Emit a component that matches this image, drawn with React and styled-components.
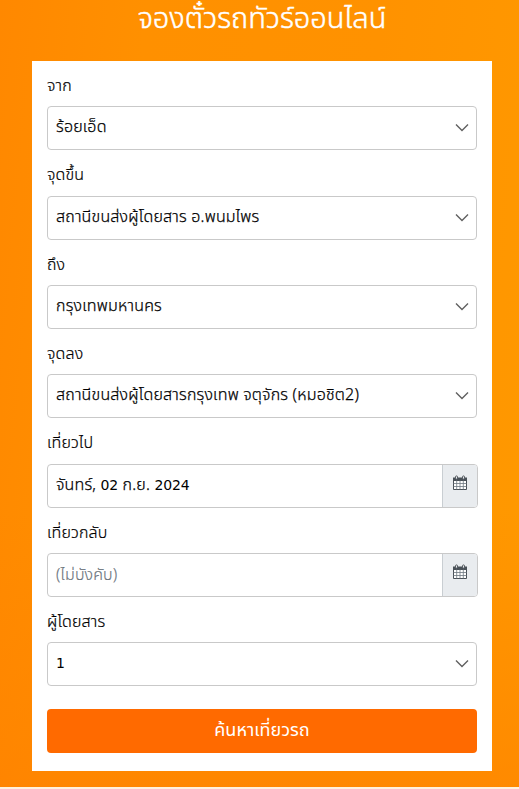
import React from 'react'
import styled, { createGlobalStyle } from 'styled-components'

const GlobalStyle = createGlobalStyle`
  * {
    box-sizing: border-box;
  }

  body {
    margin: 0;
    color: #000;
    font-family: "Noto Sans Thai", "Noto Sans", sans-serif;
    font-size: 16px;
    font-weight: 300;
  }
`

const Page = styled.main`
  height: 789px;
  padding: 0 27px 0 32px;
  border-bottom: 2px solid #fff1dc;
  background:
    linear-gradient(to bottom, rgba(255, 128, 0, 0) 65%, rgba(255, 128, 0, .6) 100%),
    linear-gradient(95deg, #ff8800 0%, #ff9000 25%, #ff9200 65%, #ff9900 100%);
`

const Title = styled.h1`
  height: 61px;
  margin: 0;
  color: #fff;
  font-size: 29px;
  font-weight: 300;
  line-height: 38px;
  text-align: center;
  white-space: nowrap;
  -webkit-text-stroke: .5px;
`

const Form = styled.form`
  height: 710px;
  padding: 15.97px 15px 0;
  background-color: #fff;
`

const Group = styled.div`
  height: 89.33px;
`

const Label = styled.label`
  display: block;
  height: 29.33px;
  line-height: 18px;
  letter-spacing: .15px;
  -webkit-text-stroke: .2px;
`

const Control = styled.div`
  display: flex;
  justify-content: space-between;
  height: 44px;
  border: 1px solid #c9c9c9;
  border-radius: 4px;
  overflow: hidden;
  margin-right: ${props => props.$wide ? '-1px' : 0};
`

const Value = styled.span`
  padding-left: 8px;
  color: ${props => props.$muted ? '#6c757d' : '#000'};
  line-height: ${props => props.$muted ? 43 : 41}px;
  letter-spacing: ${props => props.$muted ? .1 : .2}px;
  white-space: pre;
  -webkit-text-stroke: ${props => props.$muted ? .15 : .25}px;
`

const Digits = styled.span`
  font-family: "DejaVu Sans", sans-serif;
  font-size: 14px;
  font-weight: 400;
  letter-spacing: -.1px;
  -webkit-text-stroke: 0;
`

const Arrow = styled.svg`
  width: 14px;
  height: 10px;
  margin: 16px 7px 0 0;
  fill: none;
  stroke: #606060;
  stroke-width: 1.4;
`

const Addon = styled.span`
  display: flex;
  justify-content: center;
  width: 35px;
  padding-top: 10px;
  border-left: 1px solid #c9ced2;
  background-color: #e9ecef;
`

const Submit = styled.button`
  display: block;
  width: 100%;
  height: 44px;
  margin-top: 7px;
  padding: 0 0 2px;
  border: 0;
  border-radius: 4px;
  background-color: #ff6a00;
  color: #fff;
  font: inherit;
  font-size: 18px;
  font-weight: 400;
`

const Chevron = () => (
  <Arrow viewBox="0 0 14 10">
    <path d="M1 1.5l6 6 6-6" />
  </Arrow>
)

const Calendar = () => (
  <svg width="14" height="16" viewBox="0 0 14 16">
    <path d="M.5 4.2h13v10.3H.5z" fill="#fff" stroke="#495057" />
    <path d="M0 2.5h14v3.4H0z" fill="#495057" />
    <path d="M3.7 5.5v9M7 5.5v9M10.3 5.5v9M.5 8.5h13M.5 11.5h13" stroke="#6d7780" strokeWidth=".8" fill="none" />
    <rect x="2.5" y=".9" width="2" height="3.3" rx="1" fill="#e9ecef" stroke="#495057" strokeWidth=".9" />
    <rect x="9.5" y=".9" width="2" height="3.3" rx="1" fill="#e9ecef" stroke="#495057" strokeWidth=".9" />
  </svg>
)

const fields = [
  { label: 'จาก', value: 'ร้อยเอ็ด' },
  { label: 'จุดขึ้น', value: 'สถานีขนส่งผู้โดยสาร อ.พนมไพร' },
  { label: 'ถึง', value: 'กรุงเทพมหานคร' },
  { label: 'จุดลง', value: 'สถานีขนส่งผู้โดยสารกรุงเทพ จตุจักร (หมอชิต2)' },
  { label: 'เที่ยวไป', value: <>จันทร์, <Digits>02</Digits> ก.ย. <Digits>2024</Digits></>, date: true },
  { label: 'เที่ยวกลับ', value: '(ไม่บังคับ)', date: true, muted: true },
  { label: 'ผู้โดยสาร', value: <Digits>1</Digits> },
]

const Field = ({ field }) => (
  <Group>
    <Label>{field.label}</Label>
    <Control $wide={field.date}>
      <Value $muted={field.muted}>{field.value}</Value>
      {field.date ? <Addon><Calendar /></Addon> : <Chevron />}
    </Control>
  </Group>
)

export default () => (
  <>
    <GlobalStyle />
    <Page>
      <Title>จองตั๋วรถทัวร์ออนไลน์</Title>
      <Form>
        {fields.map(field => <Field field={field} key={field.label} />)}
        <Submit type="button">ค้นหาเที่ยวรถ</Submit>
      </Form>
    </Page>
  </>
)
